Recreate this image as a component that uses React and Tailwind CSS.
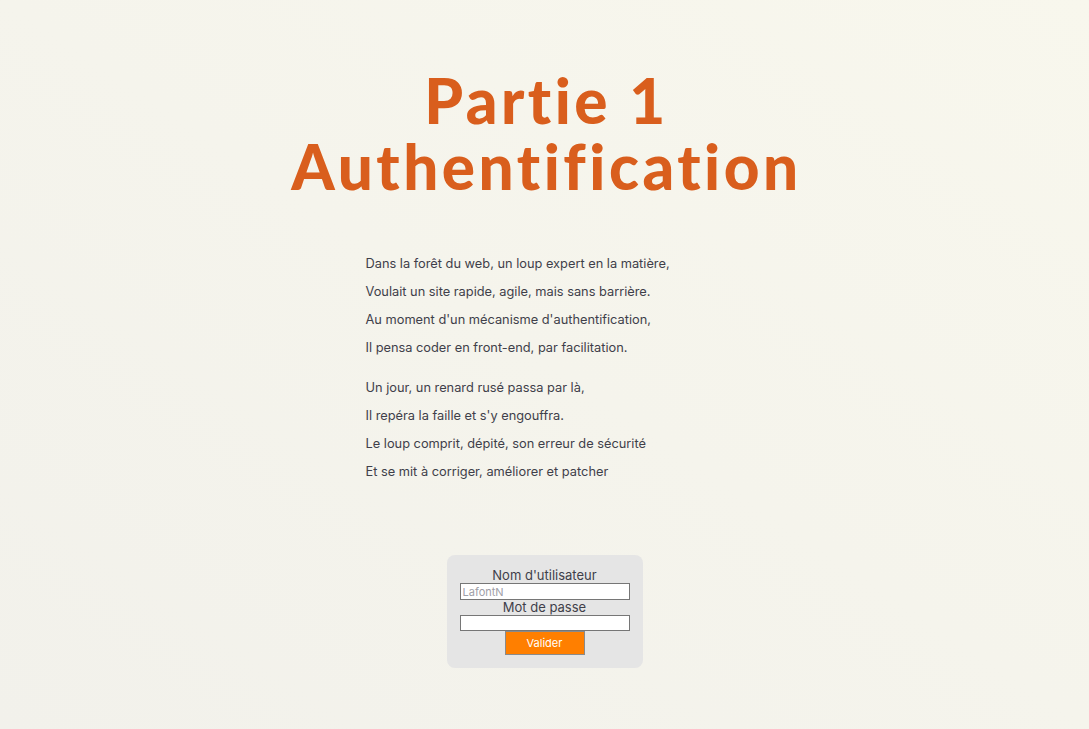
import React from 'react'

const poem = [
  [
    'Dans la forêt du web, un loup expert en la matière,',
    'Voulait un site rapide, agile, mais sans barrière.',
    "Au moment d'un mécanisme d'authentification,",
    'Il pensa coder en front-end, par facilitation.',
  ],
  [
    'Un jour, un renard rusé passa par là,',
    "Il repéra la faille et s'y engouffra.",
    'Le loup comprit, dépité, son erreur de sécurité',
    'Et se mit à corriger, améliorer et patcher',
  ],
]

export default function App() {
  return (
    <div className="min-h-screen bg-linear-to-tr from-[#f2f1eb] to-[#f8f7ed] font-['Inter',sans-serif]">
      {/* titre */}
      <h1 className="pt-[67px] pl-[4px] text-center font-['Lato',sans-serif] text-[62px] leading-[66px] font-black tracking-[3.5px] text-[#d95e1d] [font-variant-ligatures:none]">
        Partie 1
        <br />
        Authentification
      </h1>

      {/* poème */}
      <div className="mx-auto mt-[51px] w-[358px] space-y-3 text-[12.8px] leading-7 text-[#3f3f4a]">
        {poem.map((strophe, i) => (
          <div key={i}>
            {strophe.map((vers) => (
              <p key={vers}>{vers}</p>
            ))}
          </div>
        ))}
      </div>

      {/* formulaire */}
      <form
        className="mx-auto mt-[69px] flex w-[196px] flex-col items-center rounded-lg bg-[#e5e5e5] px-[13px] pt-[13px] pb-[13px] text-[13px] leading-[15px] text-[#3f3f4a]"
        onSubmit={(e) => e.preventDefault()}
      >
        <label htmlFor="user">Nom d'utilisateur</label>
        <input
          id="user"
          type="text"
          placeholder="LafontN"
          className="h-[17px] w-[170px] border border-[#767676] bg-white px-0.5 text-[11px] placeholder-[#a0a0a8]"
        />
        <label htmlFor="pass">Mot de passe</label>
        <input
          id="pass"
          type="password"
          className="h-[16px] w-[170px] border border-[#767676] bg-white px-0.5 text-[11px]"
        />
        <button
          type="submit"
          className="h-[24px] w-[80px] border border-[#8a8a8a] bg-[#ff7f00] text-[11px] text-white"
        >
          Valider
        </button>
      </form>
    </div>
  )
}
